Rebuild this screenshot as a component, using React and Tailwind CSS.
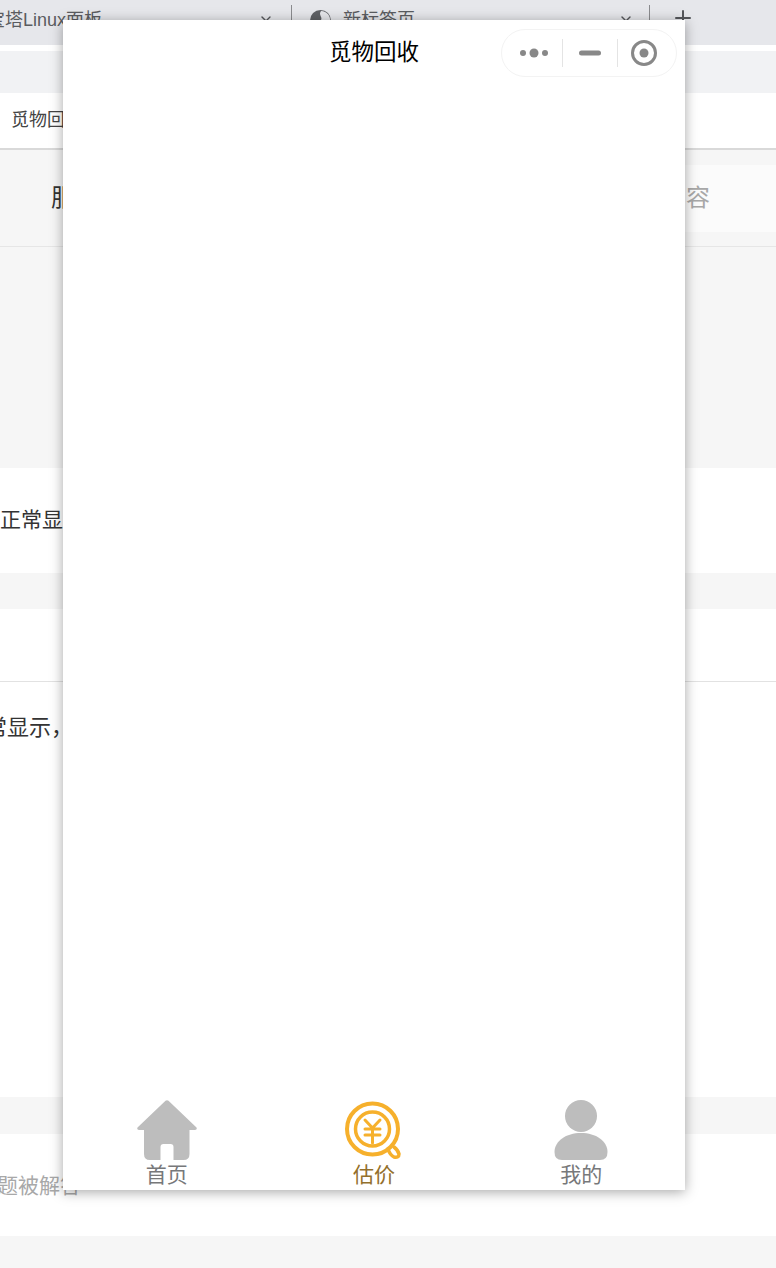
import { X, Plus } from 'lucide-react';

const font = "font-['Liberation_Sans','Noto_Sans_CJK_SC',sans-serif]";

function BrowserTab({ className, children }) {
  return (
    <div className={`flex h-[45px] items-center pb-[4px] text-[18px] text-[#5a5c60] ${className}`}>
      {children}
    </div>
  );
}

function TabDivider() {
  return <div className="mt-[5px] h-[31px] w-px shrink-0 bg-[#8a8b8e]" />;
}

function BrowserBar() {
  return (
    <div className="flex h-[45px] items-start overflow-hidden bg-[#e6e7eb]">
      <BrowserTab className="w-[291px] shrink-0">
        <span className="-ml-[13px] whitespace-nowrap">宝塔Linux面板</span>
        <X size={16} strokeWidth={2} className="ml-auto mr-[17px] text-[#55575b]" />
      </BrowserTab>
      <TabDivider />
      <BrowserTab className="w-[357px] shrink-0 pl-[18px]">
        <svg width="21" height="21" viewBox="0 0 21 21" className="shrink-0">
          <circle cx="10.5" cy="10.5" r="10.5" fill="#5f6165" />
          <path d="M11 1 C8 5 13 7 11 10 C9 13 14 16 20 12 C21 6 17 1 11 1Z" fill="#e6e7eb" />
        </svg>
        <span className="ml-[12px] whitespace-nowrap">新标签页</span>
        <X size={16} strokeWidth={2} className="ml-auto mr-[15px] text-[#55575b]" />
      </BrowserTab>
      <TabDivider />
      <Plus size={24} strokeWidth={2} className="ml-[21px] mt-[6px] shrink-0 text-[#55575b]" />
    </div>
  );
}

function BackgroundPage() {
  return (
    <div className={`flex h-[1268px] flex-col overflow-hidden ${font}`}>
      <BrowserBar />
      <div className="h-[6px] bg-white" />
      <div className="h-[42px] bg-[#f1f2f4]" />
      <div className="flex h-[55px] items-center bg-white pl-[11px] text-[18px] text-[#444]">
        觅物回收
      </div>
      <div className="h-[2px] bg-[#d9d9d9]" />
      <div className="flex h-[97px] items-center border-b border-[#e6e6e6] bg-[#f6f6f6]">
        <div className="w-[100px] shrink-0 pl-[51px] text-[24px] text-[#333]">服</div>
        <div className="flex h-[67px] flex-1 items-center justify-end bg-[#fbfbfb] pr-[66px] text-[24px] text-[#a8a8a8]">
          容
        </div>
      </div>
      <div className="h-[221px] bg-[#f6f6f6]" />
      <div className="flex h-[105px] items-center bg-white pb-[1px] text-[21px] text-[#333]">
        正常显示
      </div>
      <div className="h-[36px] bg-[#f6f6f6]" />
      <div className="h-[73px] border-b border-[#e2e2e2] bg-white" />
      <div className="h-[415px] bg-white pt-[30px] text-[22px] leading-[32px] text-[#333]">
        <span className="-ml-[15px] block whitespace-nowrap">常显示，</span>
      </div>
      <div className="h-[37px] bg-[#f6f6f6]" />
      <div className="flex h-[102px] items-start bg-white pt-[37px] text-[21px] leading-[30px] text-[#a8a8a8]">
        <span className="-ml-[3px] whitespace-nowrap">题被解答</span>
      </div>
      <div className="flex-1 bg-[#f6f6f6]" />
    </div>
  );
}

function Capsule() {
  return (
    <div className="mr-[8px] flex h-[48px] w-[176px] items-center justify-self-end rounded-full border border-[#f3f3f3] bg-white">
      <svg width="60" height="16" viewBox="0 0 60 16" className="shrink-0">
        <circle cx="21" cy="8" r="3" fill="#888" />
        <circle cx="32" cy="8" r="4.5" fill="#888" />
        <circle cx="43" cy="8" r="3" fill="#888" />
      </svg>
      <div className="h-[28px] w-px shrink-0 bg-[#e4e4e4]" />
      <svg width="54" height="16" viewBox="0 0 54 16" className="shrink-0">
        <rect x="16" y="5.5" width="22" height="5" rx="2.5" fill="#888" />
      </svg>
      <div className="h-[28px] w-px shrink-0 bg-[#e4e4e4]" />
      <svg width="52" height="30" viewBox="0 0 52 30" className="shrink-0">
        <circle cx="26" cy="15" r="11.5" fill="none" stroke="#888" strokeWidth="3" />
        <circle cx="26" cy="15" r="4.5" fill="#888" />
      </svg>
    </div>
  );
}

function HomeIcon() {
  return (
    <svg width="60" height="60" viewBox="0 0 60 60">
      <path
        d="M28.5 .8 Q30 -.3 31.500 .8 L59.500 27.500 Q60.500 29.500 58 30 L52.500 30 L52.500 54 Q52.500 60 46.500 60 L36.500 60 L36.500 47 Q36.500 44 33.500 44 L26.500 44 Q23.500 44 23.500 47 L23.500 60 L13 60 Q7 60 7 54 L7 30 L2 30 Q-.5 29.500 .5 27.500Z"
        fill="#bdbdbd"
      />
    </svg>
  );
}

function CoinIcon() {
  return (
    <svg width="60" height="60" viewBox="0 0 60 60" fill="none" stroke="#f6b02c">
      <circle cx="28.500" cy="29" r="25.500" strokeWidth="4" />
      <circle cx="28.500" cy="29" r="17" strokeWidth="3.500" />
      <path d="M21 20 L28.500 28 L36 20 M21 29 H36 M21 35 H36 M28.500 28 V43" strokeWidth="3" strokeLinecap="round" strokeLinejoin="round" />
      <path d="M44 49 Q46 55 50 57 Q55 58 55 54 Q54 50 50 47" strokeWidth="3.500" strokeLinecap="round" />
    </svg>
  );
}

function PersonIcon() {
  return (
    <svg width="60" height="60" viewBox="0 0 60 60" fill="#bdbdbd">
      <circle cx="30" cy="16" r="16" />
      <path d="M3.500 52 C3.500 41 15 33 30 33 C45 33 56.500 41 56.500 52 Q56.500 60 49 60 H11 Q3.500 60 3.500 52Z" />
    </svg>
  );
}

const tabs = [
  { label: '首页', icon: <HomeIcon />, color: 'text-[#77787a]' },
  { label: '估价', icon: <CoinIcon />, color: 'text-[#93702c]' },
  { label: '我的', icon: <PersonIcon />, color: 'text-[#77787a]' },
];

function PhoneWindow() {
  return (
    <div className={`absolute left-[63px] top-[20px] flex h-[1170px] w-[622px] flex-col justify-between bg-white shadow-[0_2px_12px_rgba(0,0,0,0.35)] ${font}`}>
      <div className="grid grid-cols-[1fr_auto_1fr] items-center pt-[9px]">
        <div />
        <h1 className="text-[22.5px] font-normal text-black">觅物回收</h1>
        <Capsule />
      </div>
      <div className="grid grid-cols-3">
        {tabs.map((tab) => (
          <div key={tab.label} className="flex flex-col items-center">
            {tab.icon}
            <span className={`text-[21px] leading-[30px] ${tab.color}`}>{tab.label}</span>
          </div>
        ))}
      </div>
    </div>
  );
}

export default function App() {
  return (
    <div className="relative h-[1268px] w-[776px] overflow-hidden bg-white">
      <BackgroundPage />
      <PhoneWindow />
    </div>
  );
}
